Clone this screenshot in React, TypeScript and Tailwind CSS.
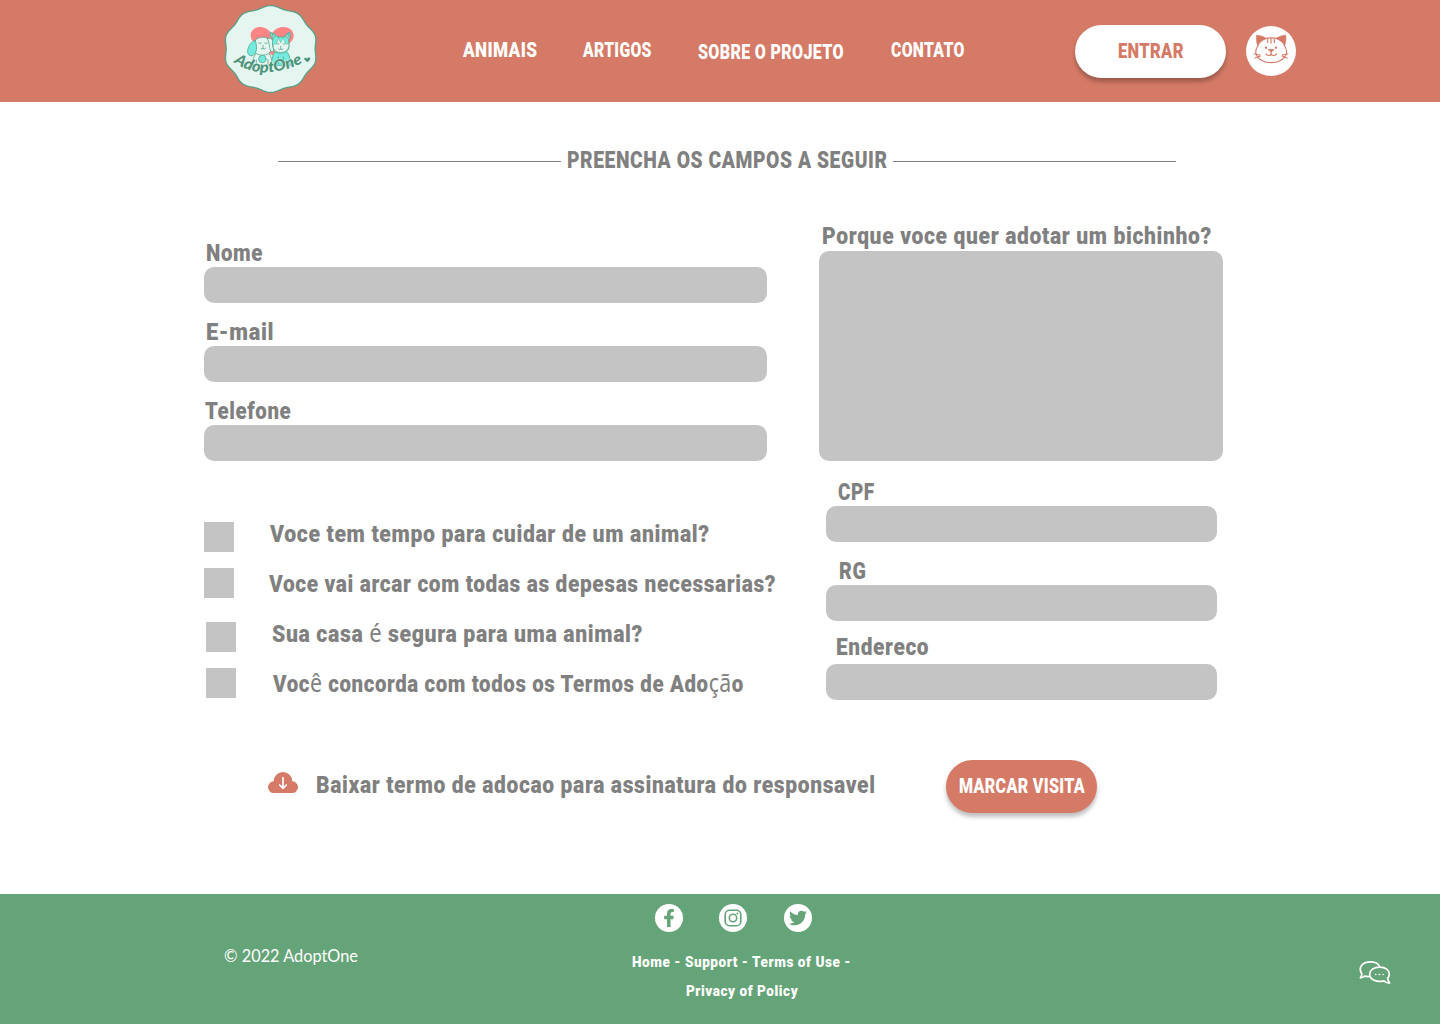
import { useLayoutEffect, useRef, useState } from "react";
import type { ReactNode } from "react";
import { FaFacebookF, FaTwitter } from "react-icons/fa";

type FitProps = { width: number; className?: string; children: ReactNode };

/* A single line of text condensed or widened to a given width. */
function Fit({ width, className = "", children }: FitProps) {
  const ref = useRef<HTMLSpanElement>(null);
  const [scale, setScale] = useState(1);
  useLayoutEffect(() => {
    if (ref.current) setScale((width - 1) / ref.current.offsetWidth);
  }, [width]);
  return (
    <span className={`block shrink-0 whitespace-nowrap leading-none ${className}`} style={{ width }}>
      <span ref={ref} className="ml-px inline-block origin-left align-top" style={{ transform: `scaleX(${scale})` }}>
        {children}
      </span>
    </span>
  );
}

const label = "h-6 text-[24px] font-black tracking-[0.03em] text-[#808080]";

function Accent({ children }: { children: ReactNode }) {
  return <span className="font-['Noto_Sans'] text-[25px] leading-[0] font-normal tracking-[0.02em]">{children}</span>;
}

function scallop(cx: number, cy: number, rx: number, ry: number) {
  const pts: string[] = [];
  for (let i = 0; i < 180; i++) {
    const t = (i / 180) * Math.PI * 2;
    const k = 1 + 0.026 * Math.cos(10 * t);
    pts.push(`${(cx + rx * k * Math.sin(t)).toFixed(1)},${(cy - ry * k * Math.cos(t)).toFixed(1)}`);
  }
  return `M${pts.join("L")}Z`;
}

function Logo() {
  return (
    <svg viewBox="0 0 330 306" className="h-[102px] w-[110px]" fill="none" strokeLinecap="round" strokeLinejoin="round">
      <path d={scallop(167, 147, 137, 127)} fill="#e5f5f0" stroke="#599f87" strokeWidth="4" />
      <path d="M171 166 C145 145 108 132 107 108 C106 76 154 71 170 103 C185 71 236 76 236 108 C236 131 195 147 171 166Z" fill="#ff8585" />
      <g stroke="#5aa68f" strokeWidth="2.5">
        <path d="M112 193 C113 176 118 166 125 158 L160 158 C169 168 172 182 172 195Z" fill="#e5f5f0" />
        <path d="M170 195 C169 174 175 160 183 153 L212 153 C223 160 227 178 226 195Z" fill="#73ebdf" />
        <path d="M119 123 C124 111 153 107 162 118 C170 128 171 151 163 159 C150 169 128 167 121 157 C116 147 115 133 119 123Z" fill="#e5f5f0" />
        <path d="M121 122 C107 125 97 141 98 157 C101 170 113 172 122 157 C127 146 124 132 121 122Z" fill="#73ebdf" />
        <path d="M157 116 C164 111 173 117 176 129 C179 148 175 157 169 155 C162 148 165 128 157 116Z" fill="#e5f5f0" />
        <path d="M174 117 C166 109 164 101 166 97 C175 99 184 105 188 111 L207 111 C213 103 220 97 225 96 C227 104 225 115 220 120 C223 130 224 143 219 150 C208 162 184 163 177 151 C172 142 171 127 174 117Z" fill="#73ebdf" />
        <path d="M190 112 L197 128 L205 112 C207 124 210 132 222 133 C222 154 203 159 196 157 C180 157 174 147 175 134 C187 132 189 123 190 112Z" fill="#e5f5f0" strokeWidth="1.5" />
        <path d="M171 101 L174 112 L181 110Z M221 101 L218 113 L212 110Z" fill="#e5f5f0" />
        <path d="M131 129q4 4 8 0 M149 129q4 4 8 0 M144 136v9 M138 146q4 3 6-1q4 4 8 0 M184 131q4 4 8 0 M204 131q4 4 8 0 M197 139v8 M191 147q4 4 6 0q4 4 7 0" />
        <circle cx="142" cy="177" r="11" fill="#73ebdf" />
        <path d="M190 171v20 M205 171v20 M124 180v12 M159 179v12" />
      </g>
      <path id="wordmark" d="M56 186 Q105 219 152 217 Q212 216 290 176" />
      <text
        className="font-['Lato'] text-[46px] font-black italic"
        fill="#4d937b"
        stroke="#e5f5f0"
        strokeWidth="3"
        paintOrder="stroke"
      >
        <textPath href="#wordmark" textLength="218" lengthAdjust="spacingAndGlyphs">AdoptOne</textPath>
      </text>
      <path d="M277 187 C271 182 266 179 268 175 C271 172 275 174 276 177 C278 171 285 172 286 176 C286 181 280 182 277 187Z" fill="#4d937b" />
    </svg>
  );
}

function CatAvatar() {
  return (
    <svg viewBox="558 48 150 150" className="h-[50px] w-[50px]" fill="none" stroke="#d57a66" strokeLinecap="round" strokeLinejoin="round">
      <circle cx="633" cy="123" r="75" fill="white" stroke="none" />
      <path d="M612 86 C625 83 642 83 655 86 M595 105 C587 117 586 124 588 131 C593 149 614 158 633 158 C653 158 674 149 679 131 C681 124 679 115 672 105" strokeWidth="3.5" />
      <path d="M590 76 C602 76 613 80 619 86 C607 90 598 98 593 107 C589 96 588 84 590 76Z M677 76 C665 76 655 80 648 86 C660 90 669 98 674 107 C678 96 679 84 677 76Z" fill="#d57a66" strokeWidth="1.5" />
      <path d="M623 86v13 M633 85v16 M643 86v13" strokeWidth="3.5" strokeLinecap="butt" />
      <circle cx="618" cy="113" r="3.5" fill="#d57a66" stroke="none" />
      <circle cx="648" cy="113" r="3.5" fill="#d57a66" stroke="none" />
      <path d="M626 119 H641 L634 126Z" fill="#d57a66" strokeWidth="3" />
      <path d="M633.5 126V132 M618 131 C621 138 632 138 633.5 132 C636 138 647 138 650 131" strokeWidth="3.5" />
      <path d="M582 132 L600 135 M585 144 L601 138 M684 132 L667 135 M682 144 L666 138" strokeWidth="3.5" />
    </svg>
  );
}

function CloudDownload() {
  return (
    <svg viewBox="0 0 90 66" className="h-[22px] w-[30px]" fill="none">
      <path d="M18 66 A17.5 17.5 0 0 1 17 31 A28 28 0 0 1 73 31 A17.5 17.5 0 0 1 72 66Z" fill="#d57a66" />
      <path d="M45 20V51 M35 42 L45 52 L55 42" stroke="white" strokeWidth="5" strokeLinecap="round" strokeLinejoin="round" />
    </svg>
  );
}

function ChatBubbles() {
  return (
    <svg viewBox="42 47 96 74" className="h-[25px] w-8" fill="none" stroke="white" strokeWidth="5" strokeLinecap="round" strokeLinejoin="round">
      <path d="M74 96 C67 97 63 96 59 95 C55 98 50 100 46 100 C50 95 51 91 50 87 C38 68 54 52 76 52 C90 52 100 57 104 66" />
      <path d="M104 68 C122 68 133 77 133 89 C133 94 131 98 128 101 C128 107 130 111 134 115 C128 116 121 113 117 109 C95 115 74 105 74 89 C74 77 86 68 104 68Z" />
      <path d="M92 90h.5 M103 90h.5 M114 90h.5" />
    </svg>
  );
}

function InstagramGlyph() {
  return (
    <svg viewBox="0 0 18 18" className="size-[18px]" fill="none" stroke="#65a378" strokeWidth="1.6">
      <rect x="1.2" y="1.2" width="15.6" height="15.6" rx="4.3" />
      <circle cx="9" cy="9" r="3.7" />
      <circle cx="13.4" cy="4.6" r="1" fill="#65a378" stroke="none" />
    </svg>
  );
}

function Field({ text, width, pad, gap = "mb-0.5" }: { text: string; width: number; pad: string; gap?: string }) {
  return (
    <label className="block">
      <span className={`block ${pad} ${gap}`}>
        <Fit width={width} className={label}>{text}</Fit>
      </span>
      <span className="block h-9 rounded-[10px] bg-[#c4c4c4]" />
    </label>
  );
}

const social = "flex size-7 items-center justify-center rounded-full bg-white text-[#65a378]";

export default function App() {
  return (
    <div className="flex h-[1024px] w-[1440px] flex-col overflow-hidden bg-white font-['Roboto',sans-serif]">
      <header className="flex h-[102px] shrink-0 items-start bg-[#d57a66] pl-[215px] text-[20px] font-black text-white">
        <Logo />
        <nav className="ml-[137px] flex h-5 pt-10 tracking-[0.02em]">
          <Fit width={75}>ANIMAIS</Fit>
          <Fit width={70} className="ml-[45px]">ARTIGOS</Fit>
          <Fit width={147} className="mt-0.5 ml-[45px]">SOBRE O PROJETO</Fit>
          <Fit width={75} className="ml-[46px]">CONTATO</Fit>
        </nav>
        <button className="mt-[25px] ml-[110px] flex h-[53px] w-[151px] justify-center rounded-full bg-white pt-4 tracking-[0.02em] text-[#d57a66] shadow-[0_4px_4px_rgba(0,0,0,0.25)]">
          <Fit width={67}>ENTRAR</Fit>
        </button>
        <div className="mt-[26px] ml-5">
          <CatAvatar />
        </div>
      </header>

      <main className="flex h-[792px] shrink-0 flex-col">
        <h1 className="mt-[46px] ml-[278px] flex h-6 w-[898px] items-center justify-between">
          <span className="mt-[3px] h-px w-[283px] bg-[#808080]" />
          <Fit width={322} className={label}>PREENCHA OS CAMPOS A SEGUIR</Fit>
          <span className="mt-[3px] h-px w-[283px] bg-[#808080]" />
        </h1>

        <div className="mt-[52px] ml-[204px] flex h-[476px]">
          <section className="w-[563px] pt-[17px]">
            <div className="flex flex-col gap-[17px]">
              <Field text="Nome" width={58} pad="pl-px" />
              <Field text="E-mail" width={69} pad="pl-px" />
              <Field text="Telefone" width={87} pad="pl-0" />
            </div>
            <div className="mt-[61px] flex">
              <div className="flex w-8 flex-col">
                <span className="size-[30px] bg-[#c4c4c4]" />
                <span className="mt-4 size-[30px] bg-[#c4c4c4]" />
                <span className="mt-6 ml-0.5 size-[30px] bg-[#c4c4c4]" />
                <span className="mt-4 ml-0.5 size-[30px] bg-[#c4c4c4]" />
              </div>
              <div className="flex flex-col gap-[26px] pl-8">
                <Fit width={441} className={`ml-px ${label}`}>Voce tem tempo para cuidar de um animal?</Fit>
                <Fit width={508} className={label}>Voce vai arcar com todas as depesas necessarias?</Fit>
                <Fit width={372} className={`ml-[3px] ${label}`}>Sua casa <Accent>é</Accent> segura para uma animal?</Fit>
                <Fit width={472} className={`ml-[4px] ${label}`}>Voc<Accent>ê</Accent> concorda com todos os Termos de Ado<Accent>çã</Accent>o</Fit>
              </div>
            </div>
          </section>

          <section className="ml-[52px] w-[404px]">
            <Fit width={391} className={`ml-0.5 ${label}`}>Porque voce quer adotar um bichinho?</Fit>
            <div className="mt-[3px] h-[210px] rounded-[10px] bg-[#c4c4c4]" />
            <div className="mt-[19px] ml-[7px] w-[391px]">
              <Field text="CPF" width={38} pad="pl-[11px]" />
              <div className="h-[17px]" />
              <Field text="RG" width={28} pad="pl-3" />
              <div className="h-3.5" />
              <Field text="Endereco" width={94} pad="pl-[9px]" gap="mb-[5px]" />
            </div>
          </section>
        </div>

        <div className="mt-[60px] ml-[268px] flex h-[53px]">
          <div className="pt-[11px]">
            <CloudDownload />
          </div>
          <Fit width={561} className={`mt-[13px] ml-[17px] ${label}`}>Baixar termo de adocao para assinatura do responsavel</Fit>
          <button className="ml-[70px] flex h-[53px] w-[151px] justify-center rounded-full bg-[#d57a66] pt-4 text-[20px] font-black tracking-[0.02em] text-white shadow-[0_4px_4px_rgba(0,0,0,0.25)]">
            <Fit width={127}>MARCAR VISITA</Fit>
          </button>
        </div>
      </main>

      <footer className="flex h-[130px] shrink-0 items-start bg-[#65a378] text-white">
        <div className="mt-[52px] ml-[223px] font-['Lato']">
          <Fit width={135} className="text-[18px]">© 2022 AdoptOne</Fit>
        </div>
        <div className="mt-2.5 ml-[273px] flex w-[220px] flex-col">
          <div className="flex pl-6">
            <a className={social}><FaFacebookF size={18} /></a>
            <a className={`ml-9 ${social}`}><InstagramGlyph /></a>
            <a className={`ml-[37px] ${social}`}><FaTwitter size={18} /></a>
          </div>
          <div className="mt-[23px] flex flex-col items-center gap-3.5 text-[15px] font-black tracking-[0.04em]">
            <Fit width={220}>Home - Support - Terms of Use -</Fit>
            <Fit width={113}>Privacy of Policy</Fit>
          </div>
        </div>
        <div className="mt-[66px] ml-[508px]">
          <ChatBubbles />
        </div>
      </footer>
    </div>
  );
}
